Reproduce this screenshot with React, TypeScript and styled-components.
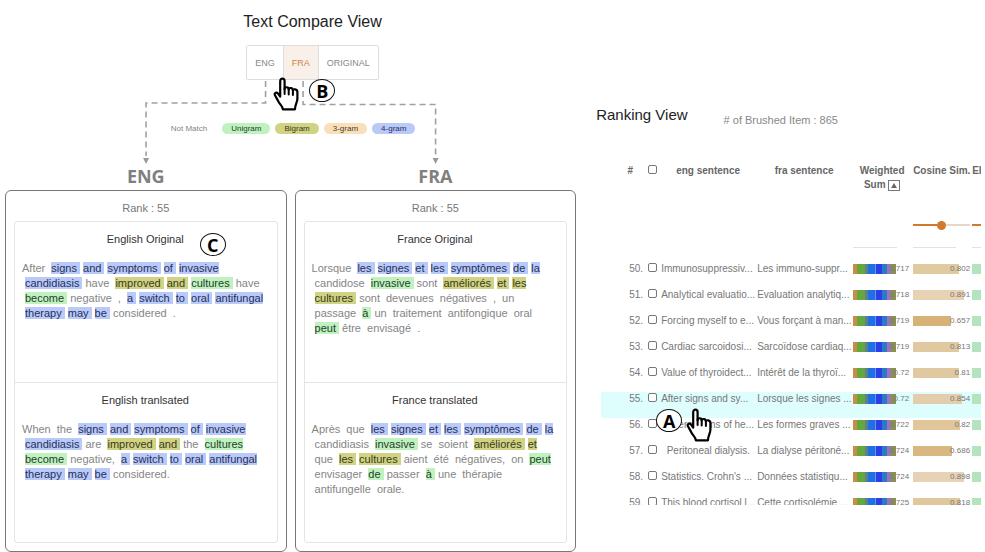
import React from "react";
import styled, { createGlobalStyle } from "styled-components";

const GlobalStyle = createGlobalStyle`
  *, *::before, *::after { box-sizing: border-box; }
  body {
    margin: 0;
    background: #fff;
    color: #777;
    font-family: "Liberation Sans", Arial, sans-serif;
    overflow: hidden;
  }
`;

const Page = styled.main`
  display: grid;
  grid-template-columns: 59fr 41fr;
  min-height: 100vh;
`;

/* ---------- shared annotations ---------- */

const Badge = styled.span<{ $left: string; $top: string }>`
  position: absolute;
  left: ${(p) => p.$left};
  top: ${(p) => p.$top};
  z-index: 3;
  display: grid;
  place-items: center;
  width: 26px;
  height: 23px;
  border: 1px solid #111;
  border-radius: 50%;
  background: #fff;
  color: #000;
  font: 700 18px/18px "Open Sans", "Noto Sans", sans-serif;
`;

const Pointer = styled.svg<{ $left: string; $top: string }>`
  position: absolute;
  left: ${(p) => p.$left};
  top: ${(p) => p.$top};
  z-index: 4;
  width: 26px;
  height: 34px;
`;

function HandPointer({ left, top }: { left: string; top: string }) {
  return (
    <Pointer $left={left} $top={top} viewBox="0 0 26 34" aria-hidden="true">
      <path
        d="M7.2 19.5V4.2C7.2 .8 11.6 .8 11.6 4.2V12.2C11.6 9.6 15.7 9.6 15.7 12.4C15.7 10.4 19.9 10.4 19.9 13.4C19.9 11.6 24.4 11.8 24.4 15V21.5C24.4 25.5 22.2 27 22 32.3H9.8C9.8 28.6 6.4 27.6 4.8 23.4L1.7 17.8C1.2 15.8 3.6 15 4.9 16.4Z"
        fill="#fff"
        stroke="#000"
        strokeWidth="2.2"
        strokeLinejoin="round"
      />
      <path d="M11.6 11V17M15.7 12V17.4M19.9 13V18" fill="none" stroke="#000" strokeWidth="2" strokeLinecap="round" />
    </Pointer>
  );
}

/* ---------- text compare view ---------- */

const ComparePane = styled.section`
  position: relative;
  min-width: 0;
  padding: 13px 5px 0;
`;

const CompareHead = styled.header`
  display: flex;
  flex-direction: column;
  align-items: center;
  padding-left: 44px;
`;

const CompareTitle = styled.h1`
  margin: 0 0 14px;
  color: #222;
  font-size: 16px;
  font-weight: 400;
  line-height: 18px;
`;

const Toggle = styled.div`
  position: relative;
  display: flex;
  border: 1px solid #ddd;
  border-radius: 2px;
  z-index: 1;
`;

const ToggleButton = styled.button<{ $active?: boolean }>`
  height: 33px;
  padding: 0 8px;
  border: 0;
  border-right: 1px solid #ddd;
  background: ${(p) => (p.$active ? "#f9f0e9" : "#fff")};
  color: ${(p) => (p.$active ? "#cd8549" : "#888")};
  font: 400 9px/12px "Liberation Sans", Arial, sans-serif;

  &:last-of-type { border-right: 0; }
`;

const Connectors = styled.svg`
  position: absolute;
  left: 0;
  top: 0;
  width: 100%;
  pointer-events: none;
`;

const Legend = styled.ul`
  display: flex;
  justify-content: center;
  gap: 5px;
  margin: 43px 0 0;
  padding: 0 0 0 5px;
  list-style: none;
  font-size: 8px;
  line-height: 11px;
`;

const tones = {
  none: { back: "transparent", ink: "#858585" },
  uni: { back: "#bff2bf", ink: "#24402a" },
  bi: { back: "#d0d384", ink: "#3a3b1c" },
  tri: { back: "#fae0ba", ink: "#4a3d2c" },
  four: { back: "#b9c9f8", ink: "#25305c" },
};
type Tone = keyof typeof tones;

const LegendItem = styled.li<{ $tone: Tone }>`
  padding: ${(p) => (p.$tone === "none" ? "0 10px 0 0" : "0 9px")};
  border-radius: 6px;
  background: ${(p) => tones[p.$tone].back};
  color: ${(p) => tones[p.$tone].ink};
`;

const Columns = styled.div`
  display: grid;
  grid-template-columns: 1fr 1fr;
  gap: 8px;
  margin-top: 32px;
`;

const ColumnLabel = styled.h2`
  margin: 0 0 4px;
  color: #808080;
  font: 700 18px/20px "Open Sans", "Noto Sans", sans-serif;
  text-align: center;
`;

const Card = styled.article`
  padding: 10px 8px 8px;
  border: 1px solid #777;
  border-radius: 6px;
`;

const Rank = styled.p`
  margin: 0 0 6px;
  font-size: 11px;
  line-height: 14px;
  text-align: center;
`;

const Sections = styled.div`
  border: 1px solid #e4e4e4;
  border-radius: 3px;
`;

const Section = styled.section`
  min-height: 160px;
  padding: 10px 8px 0 7px;

  & + & { border-top: 1px solid #e4e4e4; }
`;

const SectionTitle = styled.h3`
  position: relative;
  width: fit-content;
  margin: 0 auto 15px;
  color: #333;
  font-size: 11px;
  font-weight: 400;
  line-height: 14px;
`;

const Passage = styled.p`
  margin: 0;
  font-size: 11px;
  line-height: 15px;
`;

const Word = styled.span<{ $tone: Tone }>`
  margin-left: 3px;
  background: ${(p) => tones[p.$tone].back};
  color: ${(p) => tones[p.$tone].ink};

  &:first-child { margin-left: 0; }
`;

type Run = [Tone, string];

function Text({ runs }: { runs: Run[] }) {
  const words = runs.flatMap(([tone, text]) => text.split(" ").map((word) => ({ tone, word })));
  return (
    <Passage>
      {words.map(({ tone, word }, i) => (
        <Word key={i} $tone={tone}>{word + " "}</Word>
      ))}
    </Passage>
  );
}

const columns: { label: string; parts: { title: string; mark?: string; runs: Run[] }[] }[] = [
  {
    label: "ENG",
    parts: [
      {
        title: "English Original",
        mark: "C",
        runs: [
          ["none", "After"],
          ["four", "signs and symptoms of invasive candidiasis"],
          ["none", "have"],
          ["bi", "improved and"],
          ["uni", "cultures"],
          ["none", "have"],
          ["uni", "become"],
          ["none", "negative ,"],
          ["four", "a switch to oral antifungal therapy may be"],
          ["none", "considered ."],
        ],
      },
      {
        title: "English tranlsated",
        runs: [
          ["none", "When the"],
          ["four", "signs and symptoms of invasive candidiasis"],
          ["none", "are"],
          ["bi", "improved and"],
          ["none", "the"],
          ["uni", "cultures become"],
          ["none", "negative,"],
          ["four", "a switch to oral antifungal therapy may be"],
          ["none", "considered."],
        ],
      },
    ],
  },
  {
    label: "FRA",
    parts: [
      {
        title: "France Original",
        runs: [
          ["none", "Lorsque"],
          ["four", "les signes et les symptômes de la"],
          ["none", "candidose"],
          ["uni", "invasive"],
          ["none", "sont"],
          ["bi", "améliorés et les cultures"],
          ["none", "sont devenues négatives , un passage"],
          ["uni", "à"],
          ["none", "un traitement antifongique oral"],
          ["uni", "peut"],
          ["none", "être envisagé ."],
        ],
      },
      {
        title: "France translated",
        runs: [
          ["none", "Après que"],
          ["four", "les signes et les symptômes de la"],
          ["none", "candidiasis"],
          ["uni", "invasive"],
          ["none", "se soient"],
          ["bi", "améliorés et"],
          ["none", "que"],
          ["bi", "les cultures"],
          ["none", "aient été négatives, on"],
          ["uni", "peut"],
          ["none", "envisager"],
          ["uni", "de"],
          ["none", "passer"],
          ["uni", "à"],
          ["none", "une thérapie antifungelle orale."],
        ],
      },
    ],
  },
];

/* ---------- ranking view ---------- */

const RankingPane = styled.section`
  min-width: 0;
  padding: 106px 4px 0 15px;
`;

const RankingHead = styled.header`
  display: flex;
  align-items: flex-start;
  gap: 36px;
`;

const RankingTitle = styled.h1`
  margin: 0;
  color: #222;
  font-size: 15px;
  font-weight: 400;
  line-height: 18px;
`;

const Brushed = styled.p`
  margin: 7px 0 0;
  color: #888;
  font-size: 11px;
  line-height: 14px;
`;

const TableView = styled.div`
  max-height: 341px;
  margin: 37px 0 0 5px;
  overflow: hidden;
`;

const Table = styled.table`
  width: 100%;
  min-width: 430px;
  border-collapse: collapse;
  table-layout: fixed;
  font-size: 10px;
`;

const Col = styled.col<{ $w: number }>`
  width: ${(p) => p.$w}px;
`;

const Th = styled.th<{ $align?: string }>`
  height: 28px;
  padding: 0 1px;
  color: #666;
  font-weight: 700;
  line-height: 14px;
  text-align: ${(p) => p.$align ?? "center"};
  vertical-align: top;
  white-space: nowrap;
`;

const NumberTh = styled(Th)`
  padding-right: 14px;
`;

const SortButton = styled.button`
  display: inline-grid;
  place-items: center;
  width: 12px;
  height: 11px;
  padding: 0;
  border: 1px solid #777;
  background: #fff;
  vertical-align: middle;
`;

const FilterTd = styled.td`
  padding: 0;
`;

const Filter = styled.div`
  display: flex;
  flex-direction: column;
  justify-content: flex-end;
  height: 70px;
  padding: 0 1px 14px;
`;

const Rule = styled.div`
  width: 75%;
  height: 1px;
  margin-top: 17px;
  background: #e2e2e2;
`;

const Slider = styled.input`
  width: 100%;
  height: 10px;
  margin: 0;
  appearance: none;
  background: linear-gradient(to right, #cf7a2c 50%, #e6d8c8 50%) center / 100% 2px no-repeat;

  &::-webkit-slider-thumb {
    appearance: none;
    width: 9px;
    height: 9px;
    border-radius: 50%;
    background: #cf7a2c;
  }
`;

const Row = styled.tr<{ $selected?: boolean }>`
  height: 26px;
  background: ${(p) => (p.$selected ? "#defdfd" : "transparent")};
`;

const Td = styled.td<{ $align?: string }>`
  position: relative;
  padding: 0 1px;
  line-height: 13px;
  text-align: ${(p) => p.$align ?? "left"};
  vertical-align: top;
  white-space: pre;
`;

const NumberTd = styled(Td)`
  padding-right: 4px;
`;

const Check = styled.input`
  display: block;
  width: 9px;
  height: 9px;
  margin: 1px 0 0;
  appearance: none;
  border: 1px solid #777;
  border-radius: 2px;
  background: #fff;
`;

const BarCell = styled.div`
  display: grid;
  align-items: center;
  height: 13px;

  & > * { grid-area: 1 / 1; }
`;

const BarValue = styled.span`
  justify-self: end;
  color: #777;
  font-size: 8px;
`;

const WeightedCell = styled(BarCell)`
  padding-right: 2px;
`;

const Stack = styled.svg`
  width: 43px;
  height: 10px;
`;

const Bar = styled.div`
  height: 10px;
`;

const segments: [number, number, string][] = [
  [0, 5, "#c98d45"],
  [4, 8, "#62a83f"],
  [12, 3, "#5f8188"],
  [15, 7, "#1f70e4"],
  [22, 1, "#7a8cf0"],
  [23, 6, "#2c3fe6"],
  [29, 5, "#2b7ac4"],
  [34, 4, "#9d72c4"],
  [38, 5, "#88924e"],
];

const rows: [number, string, string, string, number, string][] = [
  [50, "Immunosuppressiv...", "Les immuno-suppr...", "0.717", 0.802, "#e0caa0"],
  [51, "Analytical evaluatio...", "Evaluation analytiq...", "0.718", 0.891, "#e7d2b4"],
  [52, "Forcing myself to e...", "Vous forçant à man...", "0.719", 0.657, "#d7b277"],
  [53, "Cardiac sarcoidosi...", "Sarcoïdose cardiaq...", "0.719", 0.813, "#e0c9a0"],
  [54, "Value of thyroidect...", "Intérêt de la thyroï...", "0.72", 0.81, "#e0c9a0"],
  [55, "After signs and sy...", "Lorsque les signes ...", "0.72", 0.854, "#e4cdac"],
  [56, "Severe forms of he...", "Les formes graves ...", "0.722", 0.82, "#e0c698"],
  [57, "  Peritoneal dialysis.", "La dialyse péritoné...", "0.724", 0.686, "#dab680"],
  [58, "Statistics. Crohn's ...", "Données statistiqu...", "0.724", 0.898, "#e7d2b6"],
  [59, "This blood cortisol l...", "Cette cortisolémie ...", "0.725", 0.818, "#e0c79c"],
];
const SELECTED = 55;

export default function App() {
  return (
    <>
      <GlobalStyle />
      <Page>
        <ComparePane>
          <Connectors viewBox="0 0 581 190" aria-hidden="true">
            <g fill="none" stroke="#a0a0a0" strokeWidth="1.6" strokeDasharray="6 4">
              <path d="M265.5 81V103H146V156" />
              <path d="M303 81V104.5H435.5V156" />
            </g>
            <path d="M143 158h6l-3 6zM432.5 158h6l-3 6z" fill="#999" />
          </Connectors>
          <CompareHead>
            <CompareTitle>Text Compare View</CompareTitle>
            <Toggle role="group" aria-label="Language">
              <ToggleButton type="button">ENG</ToggleButton>
              <ToggleButton type="button" $active aria-pressed="true">FRA</ToggleButton>
              <ToggleButton type="button">ORIGINAL</ToggleButton>
              <HandPointer left="26px" top="31px" />
              <Badge $left="62px" $top="33px">B</Badge>
            </Toggle>
          </CompareHead>
          <Legend>
            <LegendItem $tone="none">Not Match</LegendItem>
            <LegendItem $tone="uni">Unigram</LegendItem>
            <LegendItem $tone="bi">Bigram</LegendItem>
            <LegendItem $tone="tri">3-gram</LegendItem>
            <LegendItem $tone="four">4-gram</LegendItem>
          </Legend>
          <Columns>
            {columns.map((column) => (
              <div key={column.label}>
                <ColumnLabel>{column.label}</ColumnLabel>
                <Card>
                  <Rank>Rank : 55</Rank>
                  <Sections>
                    {column.parts.map((part) => (
                      <Section key={part.title}>
                        <SectionTitle>
                          {part.title}
                          {part.mark && <Badge $left="calc(100% + 16px)" $top="1px">{part.mark}</Badge>}
                        </SectionTitle>
                        <Text runs={part.runs} />
                      </Section>
                    ))}
                  </Sections>
                </Card>
              </div>
            ))}
          </Columns>
        </ComparePane>

        <RankingPane>
          <RankingHead>
            <RankingTitle>Ranking View</RankingTitle>
            <Brushed># of Brushed Item : 865</Brushed>
          </RankingHead>
          <TableView>
            <Table>
              <colgroup>
                {[46, 13, 96, 96, 60, 59, 60].map((w, i) => (
                  <Col key={i} $w={w} />
                ))}
              </colgroup>
              <thead>
                <tr>
                  <NumberTh $align="right">#</NumberTh>
                  <Th><Check type="checkbox" aria-label="Select all" /></Th>
                  <Th>eng sentence</Th>
                  <Th>fra sentence</Th>
                  <Th>
                    Weighted<br />Sum{" "}
                    <SortButton type="button" aria-label="Sort ascending">
                      <svg width="6" height="5" viewBox="0 0 6 5"><path d="M3 0l3 5H0z" fill="#666" /></svg>
                    </SortButton>
                  </Th>
                  <Th $align="left">Cosine Sim.</Th>
                  <Th $align="left">El</Th>
                </tr>
                <tr>
                  <FilterTd colSpan={4} />
                  <FilterTd><Filter><Rule /></Filter></FilterTd>
                  <FilterTd>
                    <Filter><Slider type="range" defaultValue={50} aria-label="Cosine Sim. weight" /><Rule /></Filter>
                  </FilterTd>
                  <FilterTd>
                    <Filter><Slider type="range" defaultValue={50} aria-label="El weight" /><Rule /></Filter>
                  </FilterTd>
                </tr>
              </thead>
              <tbody>
                {rows.map(([id, eng, fra, sum, cosine, color]) => (
                  <Row key={id} $selected={id === SELECTED}>
                    <NumberTd $align="right">{id}.</NumberTd>
                    <Td><Check type="checkbox" aria-label={`Select ${id}`} /></Td>
                    <Td>
                      {eng}
                      {id === SELECTED && (
                        <>
                          <Badge $left="-4px" $top="17px">A</Badge>
                          <HandPointer left="26px" top="16px" />
                        </>
                      )}
                    </Td>
                    <Td>{fra}</Td>
                    <Td>
                      <WeightedCell>
                        <Stack viewBox="0 0 43 10" aria-hidden="true">
                          {segments.map(([x, w, fill]) => (
                            <rect key={x} x={x} width={w} height="10" fill={fill} />
                          ))}
                        </Stack>
                        <BarValue>{sum}</BarValue>
                      </WeightedCell>
                    </Td>
                    <Td>
                      <BarCell>
                        <Bar style={{ width: `${cosine * 100}%`, background: color }} />
                        <BarValue>{cosine}</BarValue>
                      </BarCell>
                    </Td>
                    <Td>
                      <BarCell>
                        <Bar style={{ width: "80%", background: "#b4e4be" }} />
                      </BarCell>
                    </Td>
                  </Row>
                ))}
              </tbody>
            </Table>
          </TableView>
        </RankingPane>
      </Page>
    </>
  );
}
